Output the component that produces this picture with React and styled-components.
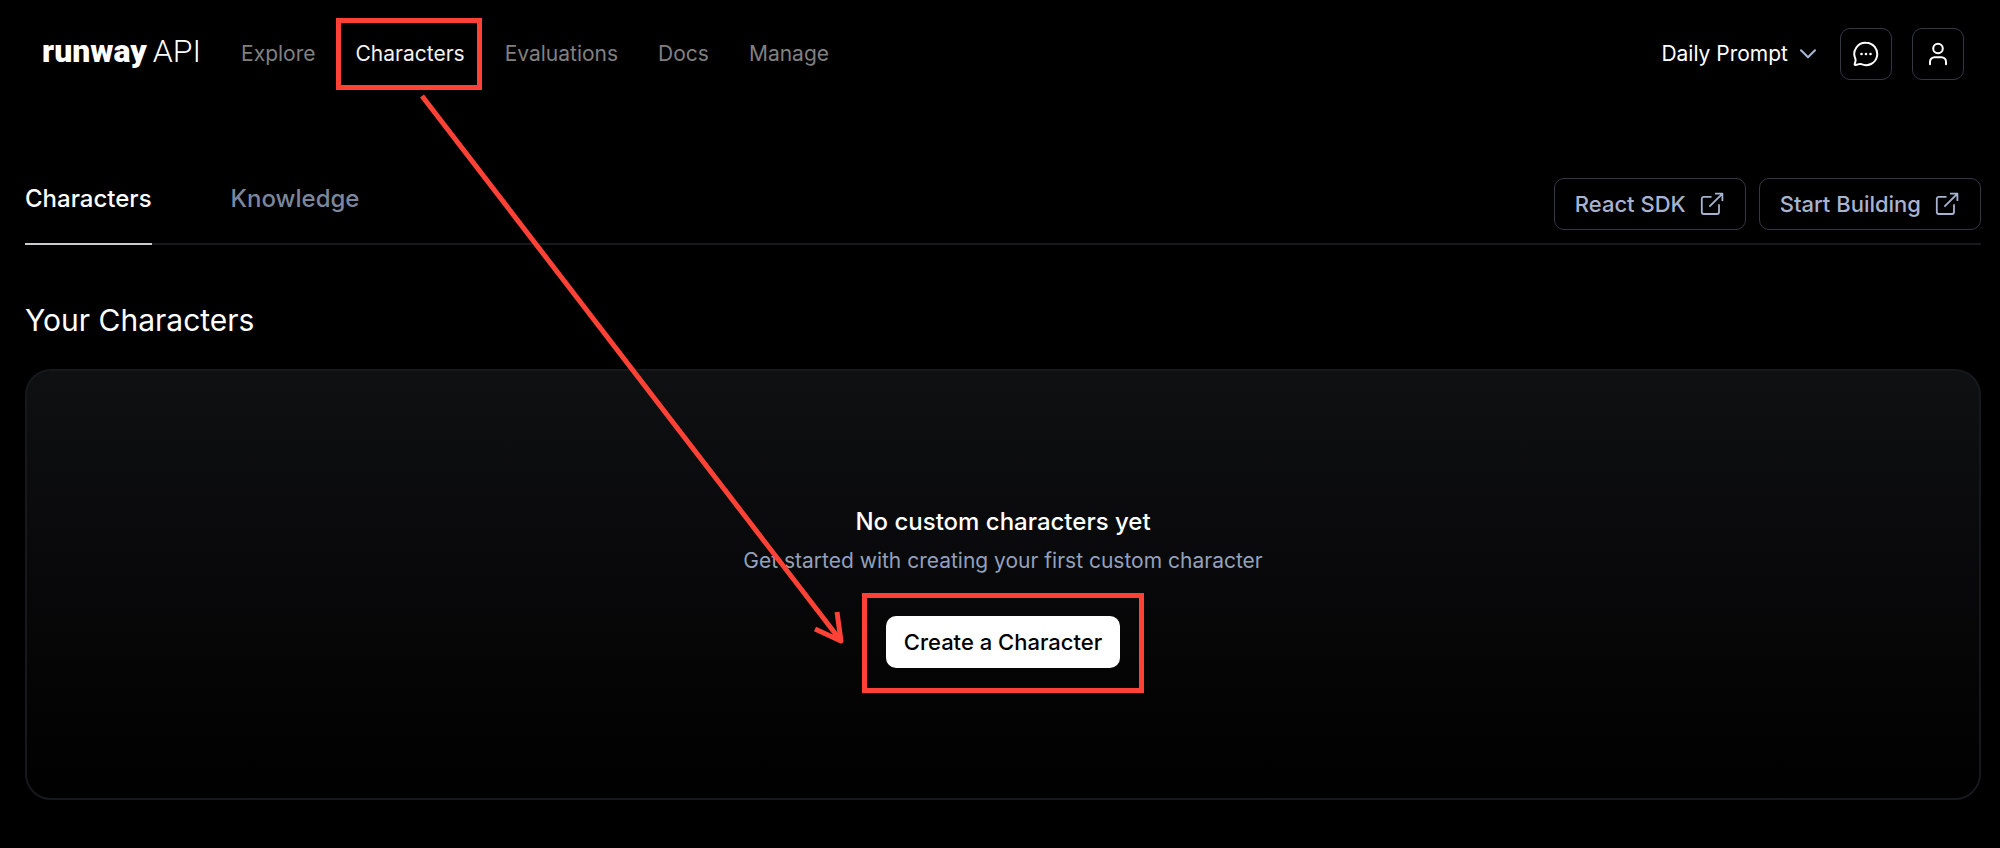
import React from 'react'
import styled, { createGlobalStyle } from 'styled-components'

const GlobalStyle = createGlobalStyle`
    * {
        box-sizing: border-box;
    }
    body {
        margin: 0;
        background: #000;
        color: #fff;
        font-family: Inter, "Liberation Sans", sans-serif;
    }
    button {
        font-family: inherit;
        cursor: pointer;
    }
`;

const Page = styled.div`
    position: relative;
    min-height: 100vh;
    padding-bottom: 48px;
`;

const Header = styled.header`
    display: flex;
    align-items: center;
    justify-content: space-between;
    padding: 28px 36px 28px 42px;
`;

const Row = styled.div`
    display: flex;
    align-items: center;
    gap: ${props => props.$gap}px;
`;

const Logo = styled.a`
    display: flex;
    align-items: baseline;
    gap: 6px;
    color: #fff;
    font-family: Roboto, sans-serif;
    font-size: 32px;
    line-height: 44px;
    font-weight: 300;
    text-decoration: none;
    padding-bottom: 6px;

    strong {
        font-weight: 900;
    }
`;

const Nav = styled.nav`
    display: flex;
    gap: 40px;
`;

const NavLink = styled.a`
    color: ${props => (props.$active ? '#f2f2f2' : '#808080')};
    font-size: 21px;
    line-height: 30px;
    font-weight: 400;
    text-decoration: none;
`;

// red frame drawn around whatever it wraps
const Callout = styled.span`
    position: relative;
    display: inline-flex;

    &::after {
        content: '';
        position: absolute;
        inset: ${props => props.$inset};
        border: 5px solid #ff4136;
        pointer-events: none;
    }
`;

const Workspace = styled.button`
    display: flex;
    align-items: center;
    gap: 12px;
    padding: 0;
    border: 0;
    background: none;
    color: #fff;
    font-size: 21px;
    line-height: 30px;
    font-weight: 400;
`;

const IconButton = styled.button`
    display: flex;
    align-items: center;
    justify-content: center;
    width: 52px;
    height: 52px;
    padding: 0;
    border: 1px solid #343843;
    border-radius: 10px;
    background: none;
    color: #fff;
`;

const Main = styled.main`
    padding: 70px 19px 0 25px;
`;

const TabBar = styled.div`
    display: flex;
    justify-content: space-between;
    border-bottom: 2px solid #17181c;
`;

const Tabs = styled.div`
    display: flex;
    gap: 79px;
    margin-bottom: -2px;
`;

const Tab = styled.button`
    padding: 1px 0 24px;
    border: 0;
    border-bottom: 2px solid ${props => (props.$active ? '#c8cccc' : 'transparent')};
    background: none;
    color: ${props => (props.$active ? '#fff' : '#7c869e')};
    font-size: 24px;
    line-height: 40px;
    font-weight: 450;
`;

const Actions = styled.div`
    display: flex;
    gap: 13px;
    padding-bottom: 13px;
`;

const ActionLink = styled.a`
    display: flex;
    align-items: center;
    gap: 14px;
    height: 52px;
    padding: 0 21px 0 20px;
    border: 1px solid #343843;
    border-radius: 10px;
    color: #a8b3cf;
    font-size: 22px;
    font-weight: 500;
    text-decoration: none;
`;

const Title = styled.h1`
    margin: 55px 0 29px;
    font-size: 30px;
    line-height: 40px;
    font-weight: 400;
`;

const Panel = styled.section`
    display: flex;
    flex-direction: column;
    align-items: center;
    padding: 131px 24px 130px;
    border: 2px solid #17181c;
    border-radius: 26px;
    background: linear-gradient(#0f1012, #000);
`;

const EmptyTitle = styled.h2`
    margin: 0;
    font-size: 24px;
    line-height: 40px;
    font-weight: 450;
`;

const EmptyText = styled.p`
    margin: 4px 0 40px;
    color: #94a0bd;
    font-size: 21px;
    line-height: 30px;
    font-weight: 400;
`;

const CreateButton = styled.button`
    height: 52px;
    padding: 0 18px;
    border: 0;
    border-radius: 10px;
    background: #fff;
    color: #000;
    font-size: 22px;
    font-weight: 500;
`;

const Arrow = styled.svg`
    position: absolute;
    top: 0;
    left: 0;
    pointer-events: none;
`;

const links = ['Explore', 'Characters', 'Evaluations', 'Docs', 'Manage']

const ChevronIcon = () => (
    <svg width="16" height="10" viewBox="0 0 16 10" fill="none" stroke="#a8b8d6" strokeWidth="2" strokeLinecap="round" strokeLinejoin="round">
        <path d="M1 1.2l7 7 7-7" />
    </svg>
)

const ChatIcon = () => (
    <svg width="26" height="26" viewBox="0 0 26 26" fill="none" stroke="currentColor" strokeWidth="2" strokeLinejoin="round">
        <path d="M13 1.8a11.2 11.2 0 1 1-4.6 21.4c-.9-.4-1.5-.3-2.3-.1l-3.4.9c-.7.2-1.2-.3-1-1l.8-3c.2-.9.1-1.5-.2-2.4A11.2 11.2 0 0 1 13 1.8z" />
        <g fill="currentColor" stroke="none">
            <circle cx="8.5" cy="13" r="1.3" />
            <circle cx="13" cy="13" r="1.3" />
            <circle cx="17.5" cy="13" r="1.3" />
        </g>
    </svg>
)

const UserIcon = () => (
    <svg width="26" height="26" viewBox="0 0 26 26" fill="none" stroke="currentColor" strokeWidth="2" strokeLinecap="round">
        <circle cx="13" cy="7.5" r="4.8" />
        <path d="M5 23.2v-2.4a4.6 4.6 0 0 1 4.6-4.6h6.8a4.6 4.6 0 0 1 4.6 4.6v2.4" />
    </svg>
)

const ExternalIcon = () => (
    <svg width="24" height="24" viewBox="0 0 24 24" fill="none" stroke="currentColor" strokeWidth="1.8" strokeLinejoin="round">
        <path d="M11.5 4.8H3.8a2 2 0 0 0-2 2V20a2 2 0 0 0 2 2H17a2 2 0 0 0 2-2v-7.7" />
        <path d="M15 1.6h7.4V9M22.2 1.8L9.4 14.6" />
    </svg>
)

export function App() {
    return (
        <Page>
            <GlobalStyle />
            <Header>
                <Row $gap={40}>
                    <Logo href="#">
                        <strong>runway</strong>
                        <span>API</span>
                    </Logo>
                    <Nav>
                        {links.map(name =>
                            name === 'Characters' ? (
                                <Callout key={name} $inset="-21px -17px -21px -20px">
                                    <NavLink href="#" $active>{name}</NavLink>
                                </Callout>
                            ) : (
                                <NavLink key={name} href="#">{name}</NavLink>
                            )
                        )}
                    </Nav>
                </Row>
                <Row $gap={20}>
                    <Row $gap={24}>
                        <Workspace>
                            Daily Prompt
                            <ChevronIcon />
                        </Workspace>
                        <IconButton aria-label="Feedback">
                            <ChatIcon />
                        </IconButton>
                    </Row>
                    <IconButton aria-label="Account">
                        <UserIcon />
                    </IconButton>
                </Row>
            </Header>
            <Main>
                <TabBar>
                    <Tabs role="tablist">
                        <Tab role="tab" aria-selected="true" $active>Characters</Tab>
                        <Tab role="tab" aria-selected="false">Knowledge</Tab>
                    </Tabs>
                    <Actions>
                        <ActionLink href="#">
                            React SDK
                            <ExternalIcon />
                        </ActionLink>
                        <ActionLink href="#">
                            Start Building
                            <ExternalIcon />
                        </ActionLink>
                    </Actions>
                </TabBar>
                <Title>Your Characters</Title>
                <Panel>
                    <EmptyTitle>No custom characters yet</EmptyTitle>
                    <EmptyText>Get started with creating your first custom character</EmptyText>
                    <Callout $inset="-23px -24px -25px">
                        <CreateButton>Create a Character</CreateButton>
                    </Callout>
                </Panel>
            </Main>
            <Arrow width="860" height="660" viewBox="0 0 860 660" fill="none" stroke="#ff4136" strokeWidth="5" strokeLinejoin="round">
                <path d="M422 96L841 641" />
                <path d="M815 629L841 641L837 612" />
            </Arrow>
        </Page>
    )
}

export default App
